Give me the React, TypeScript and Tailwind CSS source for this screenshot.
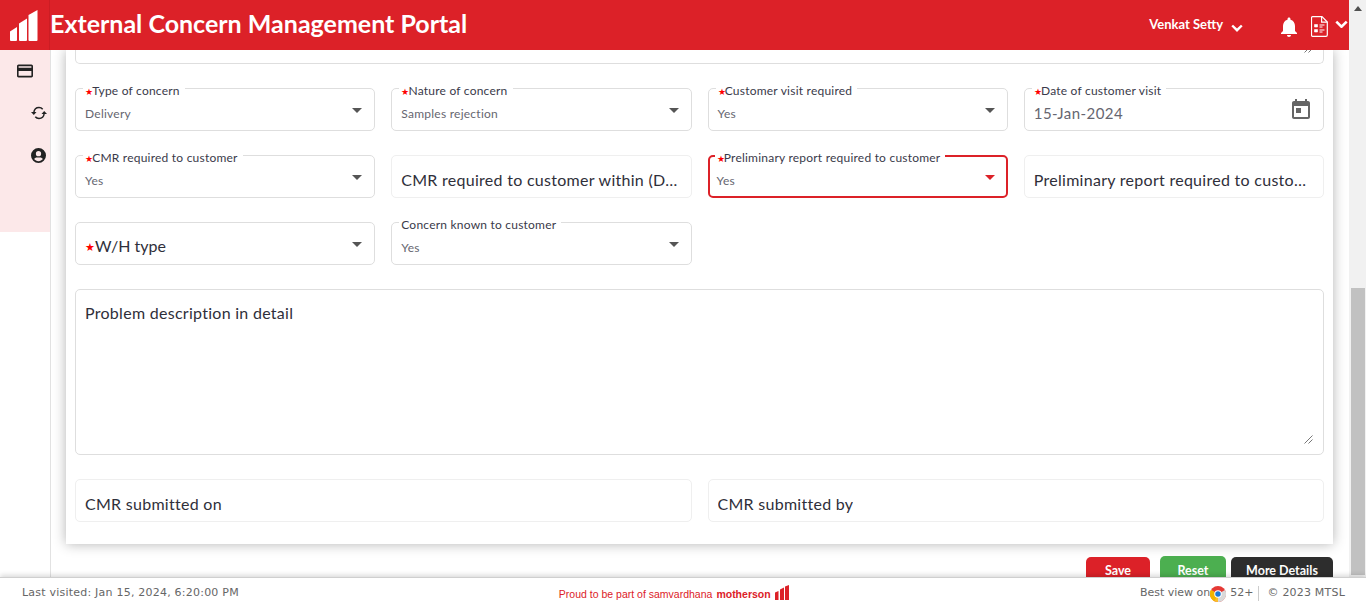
import type { ReactNode } from "react";

const RED = "#dc2128";

function Caret({ red }: { red?: boolean }) {
  return (
    <svg width="10" height="5" viewBox="0 0 10 5" className="shrink-0">
      <path d="M0 0h10L5 5z" fill={red ? RED : "#555555"} />
    </svg>
  );
}

function Star({ big }: { big?: boolean }) {
  return <span className={`leading-none text-[#ff0000] ${big ? "text-[11px]" : "-mr-px text-[9px]"}`}>★</span>;
}

function FloatingLabel({ text, required, focused }: { text: string; required?: boolean; focused?: boolean }) {
  return (
    <span
      className={`absolute flex h-[14px] items-center whitespace-nowrap bg-white pl-[2px] pr-[5px] text-[12px] leading-none tracking-[0.22px] text-[#3a3a4a] ${
        focused ? "-top-[6px] left-[5px]" : "-top-[5px] left-[7px]"
      }`}
    >
      {required && <Star />}
      {text}
    </span>
  );
}

function SelectField({
  label,
  value,
  required,
  focused,
}: {
  label: string;
  value: string;
  required?: boolean;
  focused?: boolean;
}) {
  return (
    <div
      className={`relative flex h-[43px] items-start justify-between rounded-[5px] bg-white ${
        focused ? "border-2 border-[#dc2128] pl-[7px] pr-[11px]" : "border border-[#dedede] pl-[9px] pr-[12px]"
      }`}
    >
      <FloatingLabel text={label} required={required} focused={focused} />
      <span className={`text-[12px] leading-none tracking-[0.25px] text-[#666670] ${focused ? "mt-[18px]" : "mt-[19px]"}`}>
        {value}
      </span>
      <span className={focused ? "mt-[18px]" : "mt-[19px]"}>
        <Caret red={focused} />
      </span>
    </div>
  );
}

function PlainField({ text }: { text: string }) {
  return (
    <div className="flex h-[43px] items-end rounded-[5px] border border-[#efefef] bg-white px-[9px] pb-[7px]">
      <span className="truncate text-[16px] leading-[20px] tracking-[0.28px] text-[#2f2f3a]">{text}</span>
    </div>
  );
}

function ResizeGrip() {
  return (
    <svg width="9" height="9" viewBox="0 0 9 9" className="absolute bottom-[10px] right-[10px]">
      <path d="M0.5 8.5l8-8M4.5 8.5l4-4" stroke="#777777" strokeWidth="1" fill="none" />
    </svg>
  );
}

function Chevron({ size = 12 }: { size?: number }) {
  return (
    <svg width={size} height={(size * 2) / 3} viewBox="0 0 12 8">
      <path d="M1.2 1.5L6 6.2l4.8-4.7" stroke="white" strokeWidth="2.4" fill="none" />
    </svg>
  );
}

function Logo() {
  return (
    <svg width="28" height="31" viewBox="0 0 28 31" fill="white">
      <path d="M0 21.5L7 17v13a1 1 0 0 1-1 1H1a1 1 0 0 1-1-1z" />
      <path d="M9 13.5L17 8.500v21.500a1 1 0 0 1-1 1H10a1 1 0 0 1-1-1z" />
      <path d="M18.500 5L27.500 0v30a1 1 0 0 1-1 1H19.500a1 1 0 0 1-1-1z" />
    </svg>
  );
}

function DocIcon() {
  return (
    <svg width="17" height="21" viewBox="0 0 17 21" fill="none" stroke="white" strokeWidth="1.200">
      <path d="M1.500 0.700h9.500l5.300 5.300v13a1.300 1.300 0 0 1-1.300 1.300H1.500a1 1 0 0 1-1-1V1.700a1 1 0 0 1 1-1z" />
      <path d="M10.600 0.700v5.500h5.700" />
      <path d="M3.500 8.500h3v2.500h-3zM3.500 13.500h3V16h-3z" fill="white" strokeWidth="0.600" />
      <path d="M8.500 9h5M8.500 11h3M8.500 14h5M8.500 16h3" strokeWidth="1" />
    </svg>
  );
}

function SideIcon({ children }: { children: ReactNode }) {
  return <div className="flex h-[42px] items-center">{children}</div>;
}

function Sidebar() {
  return (
    <aside className="w-[51px] shrink-0 border-r border-[#e2e2e2] bg-white">
      <div className="flex h-[182px] flex-col bg-[#fce8e9] pl-[17px]">
        <SideIcon>
          <svg width="16" height="14" viewBox="2 4 20 16" fill="#222222">
            <path d="M20 4H4c-1.110 0-1.990.890-1.990 2L2 18c0 1.110.890 2 2 2h16c1.110 0 2-.890 2-2V6c0-1.110-.890-2-2-2zm0 14H4v-6h16v6zm0-10H4V6h16v2z" />
          </svg>
        </SideIcon>
        <SideIcon>
          <svg width="16" height="14" viewBox="0 0 16 14" fill="none" stroke="#222222" strokeWidth="1.500" className="ml-[14px]">
            <path d="M2.800 6.500C3.200 3.500 5.300 1.500 8 1.500c1.500 0 2.800.6 3.700 1.700" />
            <path d="M13.200 7.500C12.800 10.500 10.700 12.500 8 12.500c-1.500 0-2.800-.6-3.700-1.700" />
            <path d="M0 6h5.500L2.800 9z" fill="#222222" stroke="none" />
            <path d="M10.500 8H16l-2.800-3z" fill="#222222" stroke="none" />
          </svg>
        </SideIcon>
        <SideIcon>
          <svg width="15" height="15" viewBox="0 0 16 16" fill="#222222" className="ml-[14px]">
            <path d="M8 0a8 8 0 1 0 0 16A8 8 0 0 0 8 0zm0 3.200a2.800 2.800 0 1 1 0 5.600 2.800 2.800 0 0 1 0-5.600zM8 14c-1.900 0-3.600-.9-4.700-2.200C3.900 10.700 5 10 6.300 10h3.400c1.300 0 2.400.7 3 1.800C11.600 13.100 9.900 14 8 14z" />
          </svg>
        </SideIcon>
      </div>
    </aside>
  );
}

function Header() {
  return (
    <header className="flex h-[50px] shrink-0 items-center bg-[#dc2128] text-white">
      <div className="flex h-full w-[50px] shrink-0 items-center border-r border-[#cc1d24] pl-[10px]">
        <Logo />
      </div>
      <h1 className="-mt-[3px] whitespace-nowrap text-[25px] font-bold leading-none">External Concern Management Portal</h1>
      <span className="ml-auto -mt-[1px] text-[13px] font-bold">Venkat Setty</span>
      <span className="ml-[8px] mt-[5px]">
        <Chevron />
      </span>
      <svg width="24" height="24" viewBox="0 0 24 24" fill="white" className="ml-[34px] mt-[4px]">
        <path d="M12 22c1.100 0 2-.9 2-2h-4c0 1.100.890 2 2 2zm6-6v-5c0-3.070-1.640-5.640-4.500-6.320V4c0-.830-.670-1.500-1.500-1.500s-1.500.670-1.500 1.500v.680C7.630 5.360 6 7.920 6 11v5l-2 2v1h16v-1l-2-2z" />
      </svg>
      <span className="ml-[10px] mt-[3px]">
        <DocIcon />
      </span>
      <span className="ml-[7px] mr-[1px] -mt-[2px]">
        <Chevron size={13} />
      </span>
    </header>
  );
}

function ConcernForm() {
  return (
    <section className="w-[1267px] bg-white px-[9px] pb-[22px] shadow-[0_0_12px_rgba(0,0,0,0.3)]">
      <div className="relative h-[14px] rounded-b-[5px] border border-t-0 border-[#dedede]">
        <ResizeGrip />
      </div>
      <div className="mt-[24px] grid grid-cols-4 gap-x-[16px] gap-y-[24px]">
        <SelectField label="Type of concern" value="Delivery" required />
        <SelectField label="Nature of concern" value="Samples rejection" required />
        <SelectField label="Customer visit required" value="Yes" required />
        <div className="relative flex h-[43px] items-start justify-between rounded-[5px] border border-[#dedede] pl-[9px] pr-[10px]">
          <FloatingLabel text="Date of customer visit" required />
          <span className="mt-[14px] text-[15px] leading-[20px] tracking-[0.45px] text-[#666670]">15-Jan-2024</span>
          <svg width="24" height="24" viewBox="0 0 24 24" fill="#666666" className="mt-[9px]">
            <path d="M19 3h-1V1h-2v2H8V1H6v2H5c-1.110 0-1.990.9-1.990 2L3 19c0 1.100.890 2 2 2h14c1.100 0 2-.9 2-2V5c0-1.100-.9-2-2-2zm0 16H5V8h14v11zM7 10h5v5H7z" />
          </svg>
        </div>

        <SelectField label="CMR required to customer" value="Yes" required />
        <PlainField text="CMR required to customer within (Days)" />
        <SelectField label="Preliminary report required to customer" value="Yes" required focused />
        <PlainField text="Preliminary report required to customer within (Days)" />

        <div className="flex h-[43px] items-start justify-between rounded-[5px] border border-[#dedede] pl-[9px] pr-[12px]">
          <span className="mt-[13px] flex items-center text-[16px] leading-[20px] tracking-[0.03px] text-[#2f2f3a]">
            <Star big />
            W/H type
          </span>
          <span className="mt-[19px]">
            <Caret />
          </span>
        </div>
        <SelectField label="Concern known to customer" value="Yes" />
        <div className="col-span-2" />

        <div className="relative col-span-4 h-[166px] rounded-[5px] border border-[#dedede] px-[9px] pt-[13px]">
          <p className="text-[16px] leading-[20px] tracking-[0.28px] text-[#2f2f3a]">Problem description in detail</p>
          <ResizeGrip />
        </div>

        <div className="col-span-2">
          <PlainField text="CMR submitted on" />
        </div>
        <div className="col-span-2">
          <PlainField text="CMR submitted by" />
        </div>
      </div>
    </section>
  );
}

function Actions() {
  return (
    <div className="mt-[13px] flex w-[1267px] items-start justify-end text-[12.5px] font-bold text-white">
      <button type="button" className="h-[28px] w-[64px] rounded-t-[5px] bg-[#dc2128]">
        Save
      </button>
      <button type="button" className="-mt-[1px] ml-[10px] h-[30px] w-[66px] rounded-t-[5px] bg-[#4caf50]">
        Reset
      </button>
      <button type="button" className="ml-[5px] h-[28px] w-[102px] rounded-t-[5px] bg-[#2d2d2d]">
        More Details
      </button>
    </div>
  );
}

function ChromeIcon() {
  return (
    <svg width="16" height="16" viewBox="0 0 32 32" className="shrink-0">
      <circle cx="16" cy="16" r="16" fill="#e53935" />
      <path d="M16 16L2.100 8A16 16 0 0 0 16 32l8-16z" fill="#fbc02d" />
      <path d="M16 16L2.100 8A16 16 0 0 0 9 30.400z" fill="#f4b400" />
      <path d="M16 16l14-8A16 16 0 0 1 16 32z" fill="#d9d9d9" />
      <circle cx="16" cy="16" r="7.500" fill="white" />
      <circle cx="16" cy="16" r="5.500" fill="#1e78d6" />
    </svg>
  );
}

function Footer() {
  return (
    <footer className="relative z-10 flex h-[30px] shrink-0 items-center border-t border-[#cfcfcf] bg-white pl-[22px] pr-[21px] font-['DejaVu_Sans',sans-serif] text-[11px] text-[#666666] shadow-[0_-2px_5px_rgba(0,0,0,0.15)]">
      <span className="mt-[2px] whitespace-nowrap tracking-[0.22px]">Last visited: Jan 15, 2024, 6:20:00 PM</span>
      <div className="ml-[320px] mt-[5px] flex items-center whitespace-nowrap font-['Liberation_Sans',sans-serif] text-[#dc2128]">
        <span className="text-[10.500px]">Proud to be part of samvardhana</span>
        <span className="ml-[4px] text-[10.500px] font-bold">motherson</span>
        <svg width="14" height="15" viewBox="0 0 14 15" fill="#dc2128" className="ml-[4px] -mt-[6px]">
          <path d="M0 7.500l3.500-1.500v9H0zM5 4.500l4-2V15H5zM10 1.500l4-1.500v15h-4z" />
        </svg>
      </div>
      <div className="ml-auto mt-[2px] flex items-center whitespace-nowrap">
        <span>Best view on</span>
        <span className="mt-[1px]">
          <ChromeIcon />
        </span>
        <span className="ml-[4px]">52+</span>
        <span className="ml-[5px] h-[15px] w-px bg-[#cccccc]" />
        <span className="ml-[8px] tracking-[0.2px]">© 2023 MTSL</span>
      </div>
    </footer>
  );
}

function Scrollbar() {
  return (
    <div className="flex w-[17px] shrink-0 flex-col items-center bg-[#f1f1f1] pt-[6px]">
      <svg width="8" height="5" viewBox="0 0 8 5">
        <path d="M0 5L4 0l4 5z" fill="#505050" />
      </svg>
      <div className="mt-[277px] h-[287px] w-[14px] bg-[#c1c1c1]" />
    </div>
  );
}

export default function App() {
  return (
    <div className="flex h-[607px] w-[1366px] flex-col overflow-hidden bg-white font-[Lato,sans-serif]">
      <div className="flex min-h-0 flex-1">
        <div className="flex w-[1349px] flex-col">
          <Header />
          <div className="flex min-h-0 flex-1">
            <Sidebar />
            <main className="min-w-0 flex-1 overflow-hidden pl-[15px]">
              <ConcernForm />
              <Actions />
            </main>
          </div>
        </div>
        <Scrollbar />
      </div>
      <Footer />
    </div>
  );
}
